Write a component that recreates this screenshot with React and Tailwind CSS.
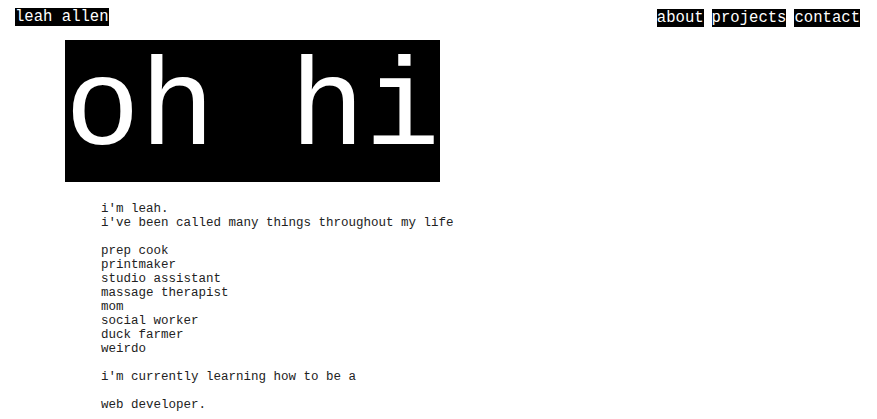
const jobs = [
  'prep cook',
  'printmaker',
  'studio assistant',
  'massage therapist',
  'mom',
  'social worker',
  'duck farmer',
  'weirdo',
]

export default function App() {
  const mono = { fontFamily: '"Courier New", "Nimbus Mono PS", "FreeMono", "Liberation Mono", monospace' }
  return (
    <div className="min-h-screen bg-white text-black" style={mono}>
      <header className="flex items-start justify-between pl-[15px] pr-[17px] pt-[8px]">
        <span className="bg-black text-white text-[15.6px] leading-[18px]">leah allen</span>
        <nav className="flex gap-[8px] pt-[1px]">
          <a href="#" className="bg-black text-white text-[15.6px] leading-[18px]">about</a>
          <a href="#" className="bg-black text-white text-[15.6px] leading-[18px]">projects</a>
          <a href="#" className="bg-black text-white text-[15.6px] leading-[18px]">contact</a>
        </nav>
      </header>

      <main className="pl-[65px] pt-[14px]">
        <h1 className="inline-block bg-black text-white text-[125px] leading-[142px] whitespace-pre -mt-[1px]">oh hi</h1>

        <div className="pl-[36px] pt-[20px] text-[12.5px] leading-[14px] text-[#222]">
          <p>i'm leah.</p>
          <p>i've been called many things throughout my life</p>
          <ul className="mt-[14px]">
            {jobs.map(j => (
              <li key={j}>{j}</li>
            ))}
          </ul>
          <p className="mt-[14px]">i'm currently learning how to be a</p>
          <p className="mt-[14px]">web developer.</p>
        </div>
      </main>
    </div>
  )
}
